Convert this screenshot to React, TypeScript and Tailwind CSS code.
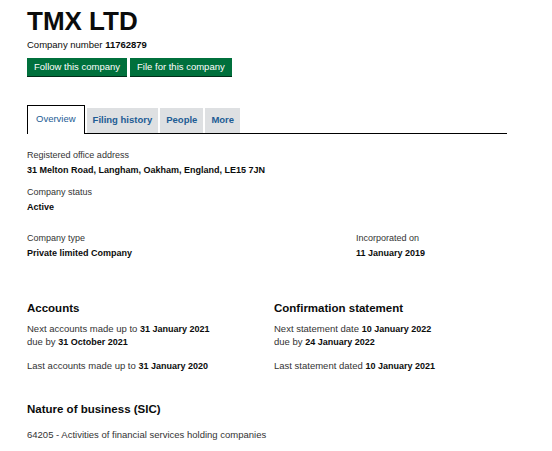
import React from "react";

const font = { fontFamily: '"Liberation Sans", Arial, sans-serif' };

function Label({ children }: { children: React.ReactNode }) {
  return <div className="text-[9px] leading-[12px] text-[#333]">{children}</div>;
}
function Value({ children }: { children: React.ReactNode }) {
  return <div className="text-[9px] leading-[12px] font-bold text-[#0b0c0c] mt-[3px]">{children}</div>;
}
function B({ children }: { children: React.ReactNode }) {
  return <span className="font-bold text-[9px] leading-[10px] text-[#0b0c0c]">{children}</span>;
}

export default function App() {
  return (
    <div className="w-[552px] h-[451px] bg-white text-[#0b0c0c] pl-[27px] pt-[8px]" style={font}>
      <h1 className="text-[26px] leading-[26px] font-bold">TMX LTD</h1>
      <div className="text-[9.5px] leading-[12px] mt-[5px]">
        Company number <span className="font-bold">11762879</span>
      </div>
      <div className="flex gap-[3px] mt-[7px]">
        <div className="h-[18px] px-[7px] bg-[#00703c] text-white text-[9.5px] flex items-center shadow-[0_1px_0_#002d18]">Follow this company</div>
        <div className="h-[18px] px-[7px] bg-[#00703c] text-white text-[9.5px] flex items-center shadow-[0_1px_0_#002d18]">File for this company</div>
      </div>
      <div className="mt-[29px] w-[480px] flex items-end gap-[2px] border-b border-black">
        <div className="h-[29px] px-[8px] border border-b-0 border-black bg-white -mb-px flex items-center text-[9.5px] text-[#1d5c94] pb-[1px]">Overview</div>
        <div className="h-[25px] px-[6px] bg-[#dee0e2] flex items-center text-[9.5px] text-[#1d5c94] font-bold">Filing history</div>
        <div className="h-[25px] px-[6px] bg-[#dee0e2] flex items-center text-[9.5px] text-[#1d5c94] font-bold">People</div>
        <div className="h-[25px] px-[6px] bg-[#dee0e2] flex items-center text-[9.5px] text-[#1d5c94] font-bold">More</div>
      </div>

      <div className="mt-[15px]">
        <Label>Registered office address</Label>
        <Value>31 Melton Road, Langham, Oakham, England, LE15 7JN</Value>
      </div>
      <div className="mt-[10px]">
        <Label>Company status</Label>
        <Value>Active</Value>
      </div>
      <div className="mt-[19px] flex">
        <div className="w-[329px]">
          <Label>Company type</Label>
          <Value>Private limited Company</Value>
        </div>
        <div>
          <Label>Incorporated on</Label>
          <Value>11 January 2019</Value>
        </div>
      </div>

      <div className="mt-[42px] flex">
        <div className="w-[247px]">
          <div className="text-[11.5px] font-bold leading-[14px]">Accounts</div>
          <div className="text-[9.5px] leading-[12px] mt-[8px] text-[#333]">
            Next accounts made up to <B>31 January 2021</B>
          </div>
          <div className="text-[9.5px] leading-[12px] mt-[1px] text-[#333]">
            due by <B>31 October 2021</B>
          </div>
          <div className="text-[9.5px] leading-[12px] mt-[12px] text-[#333]">
            Last accounts made up to <B>31 January 2020</B>
          </div>
        </div>
        <div>
          <div className="text-[11.5px] font-bold leading-[14px]">Confirmation statement</div>
          <div className="text-[9.5px] leading-[12px] mt-[8px] text-[#333]">
            Next statement date <B>10 January 2022</B>
          </div>
          <div className="text-[9.5px] leading-[12px] mt-[1px] text-[#333]">
            due by <B>24 January 2022</B>
          </div>
          <div className="text-[9.5px] leading-[12px] mt-[12px] text-[#333]">
            Last statement dated <B>10 January 2021</B>
          </div>
        </div>
      </div>

      <div className="mt-[30px] text-[11.5px] font-bold leading-[14px]">Nature of business (SIC)</div>
      <div className="mt-[13px] text-[9.5px] leading-[12px] text-[#333]">64205 - Activities of financial services holding companies</div>
    </div>
  );
}
